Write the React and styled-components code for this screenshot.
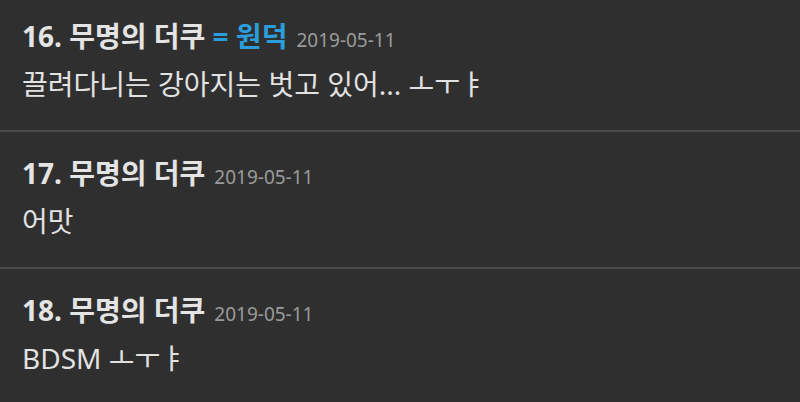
import React from "react";
import styled, { createGlobalStyle } from "styled-components";

const Global = createGlobalStyle`
  html, body { margin: 0; padding: 0; background: #2f2f2f; }
  body { font-family: "Noto Sans", "Noto Sans CJK KR", sans-serif; }
`;

const List = styled.div`
  width: 800px;
  height: 402px;
  overflow: hidden;
  background: #2f2f2f;
`;

const Row = styled.div`
  padding: 22px 22px 0;
  height: 137px;
  box-sizing: border-box;
  border-bottom: 2px solid #4a4a4a;
  &:first-child {
    padding-top: 17px;
    height: 132px;
  }
  &:last-child { border-bottom: none; }
`;

const Title = styled.div`
  display: flex;
  align-items: baseline;
  gap: 9px;
  line-height: 38px;
  white-space: nowrap;
`;

const Name = styled.span`
  font-family: "Noto Sans", "Noto Sans CJK KR", sans-serif;
  font-weight: 700;
  font-size: 28px;
  color: #e4e4e4;
`;

const Tag = styled.span`
  color: #2b9ddb;
`;

const Date = styled.span`
  font-family: "Noto Sans", "Noto Sans CJK KR", sans-serif;
  font-size: 19px;
  color: #9a9a9a;
`;

const Text = styled.div`
  margin-top: 6px;
  font-family: "Noto Sans", "Noto Sans CJK KR", sans-serif;
  font-size: 28px;
  line-height: 38px;
  color: #e2e2e2;
  white-space: nowrap;
`;

const comments = [
  { n: 16, name: "무명의 더쿠", tag: "= 원덕", date: "2019-05-11", text: "끌려다니는 강아지는 벗고 있어... ㅗㅜㅑ" },
  { n: 17, name: "무명의 더쿠", date: "2019-05-11", text: "어맛" },
  { n: 18, name: "무명의 더쿠", date: "2019-05-11", text: "BDSM ㅗㅜㅑ" },
];

export default function App() {
  return (
    <>
      <Global />
      <List>
        {comments.map((c) => (
          <Row key={c.n}>
            <Title>
              <Name>
                {c.n}. {c.name}
                {c.tag && <Tag> {c.tag}</Tag>}
              </Name>
              <Date>{c.date}</Date>
            </Title>
            <Text>{c.text}</Text>
          </Row>
        ))}
      </List>
    </>
  );
}
